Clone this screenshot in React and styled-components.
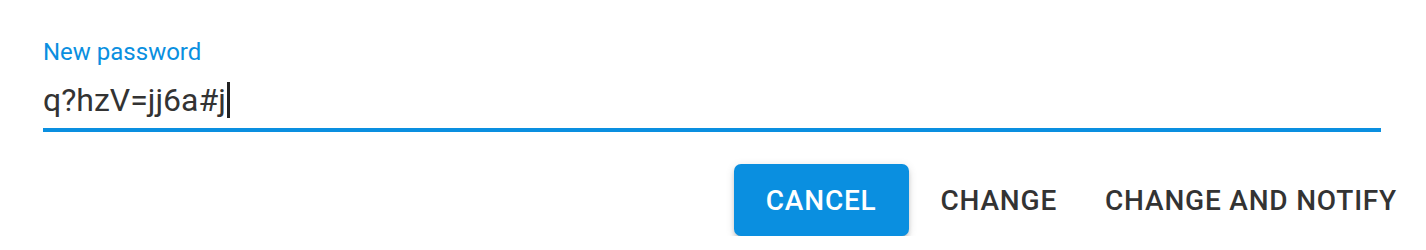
import React from "react";
import styled, { createGlobalStyle } from "styled-components";

const GlobalStyle = createGlobalStyle`
  body {
    margin: 0;
    background: #ffffff;
    font-family: Roboto, "Liberation Sans", sans-serif;
  }
`;

const Dialog = styled.section`
  display: flex;
  flex-direction: column;
  padding-top: 40px;
`;

const Field = styled.div`
  display: flex;
  flex-direction: column;
  margin: 0 45px 0 43px;
`;

const Label = styled.label`
  font-size: 24px;
  line-height: 24px;
  color: #0a8fe0;
`;

const Input = styled.div`
  display: flex;
  align-items: center;
  margin-top: 17px;
  padding-bottom: 9px;
  border-bottom: 4px solid #0a8fe0;
  font-size: 32px;
  line-height: 38px;
  color: #333333;
  white-space: pre;
`;

const Caret = styled.span`
  display: inline-block;
  width: 3px;
  height: 36px;
  margin-left: 1px;
  background: #222222;
`;

const Actions = styled.div`
  display: flex;
  justify-content: flex-end;
  gap: 16px;
  margin-top: 32px;
  padding-right: 13px;
`;

const Button = styled.button`
  height: 72px;
  padding: 0 ${(p) => (p.$primary ? 32 : 16)}px;
  border: none;
  border-radius: 7px;
  font-family: Roboto, "Liberation Sans", sans-serif;
  font-size: 28px;
  font-weight: 500;
  letter-spacing: 0.8px;
  text-transform: uppercase;
  cursor: pointer;
  color: ${(p) => (p.$primary ? "#ffffff" : "#333333")};
  background: ${(p) => (p.$primary ? "#0a8fe0" : "transparent")};
  box-shadow: ${(p) =>
    p.$primary
      ? "0 6px 2px -4px rgba(0,0,0,.2), 0 4px 4px 0 rgba(0,0,0,.14), 0 2px 10px 0 rgba(0,0,0,.12)"
      : "none"};
`;

export default function App() {
  return (
    <>
      <GlobalStyle />
      <Dialog>
        <Field>
          <Label>New password</Label>
          <Input>
            q?hzV=jj6a#j
            <Caret />
          </Input>
        </Field>
        <Actions>
          <Button $primary>Cancel</Button>
          <Button>Change</Button>
          <Button>Change and notify</Button>
        </Actions>
      </Dialog>
    </>
  );
}
